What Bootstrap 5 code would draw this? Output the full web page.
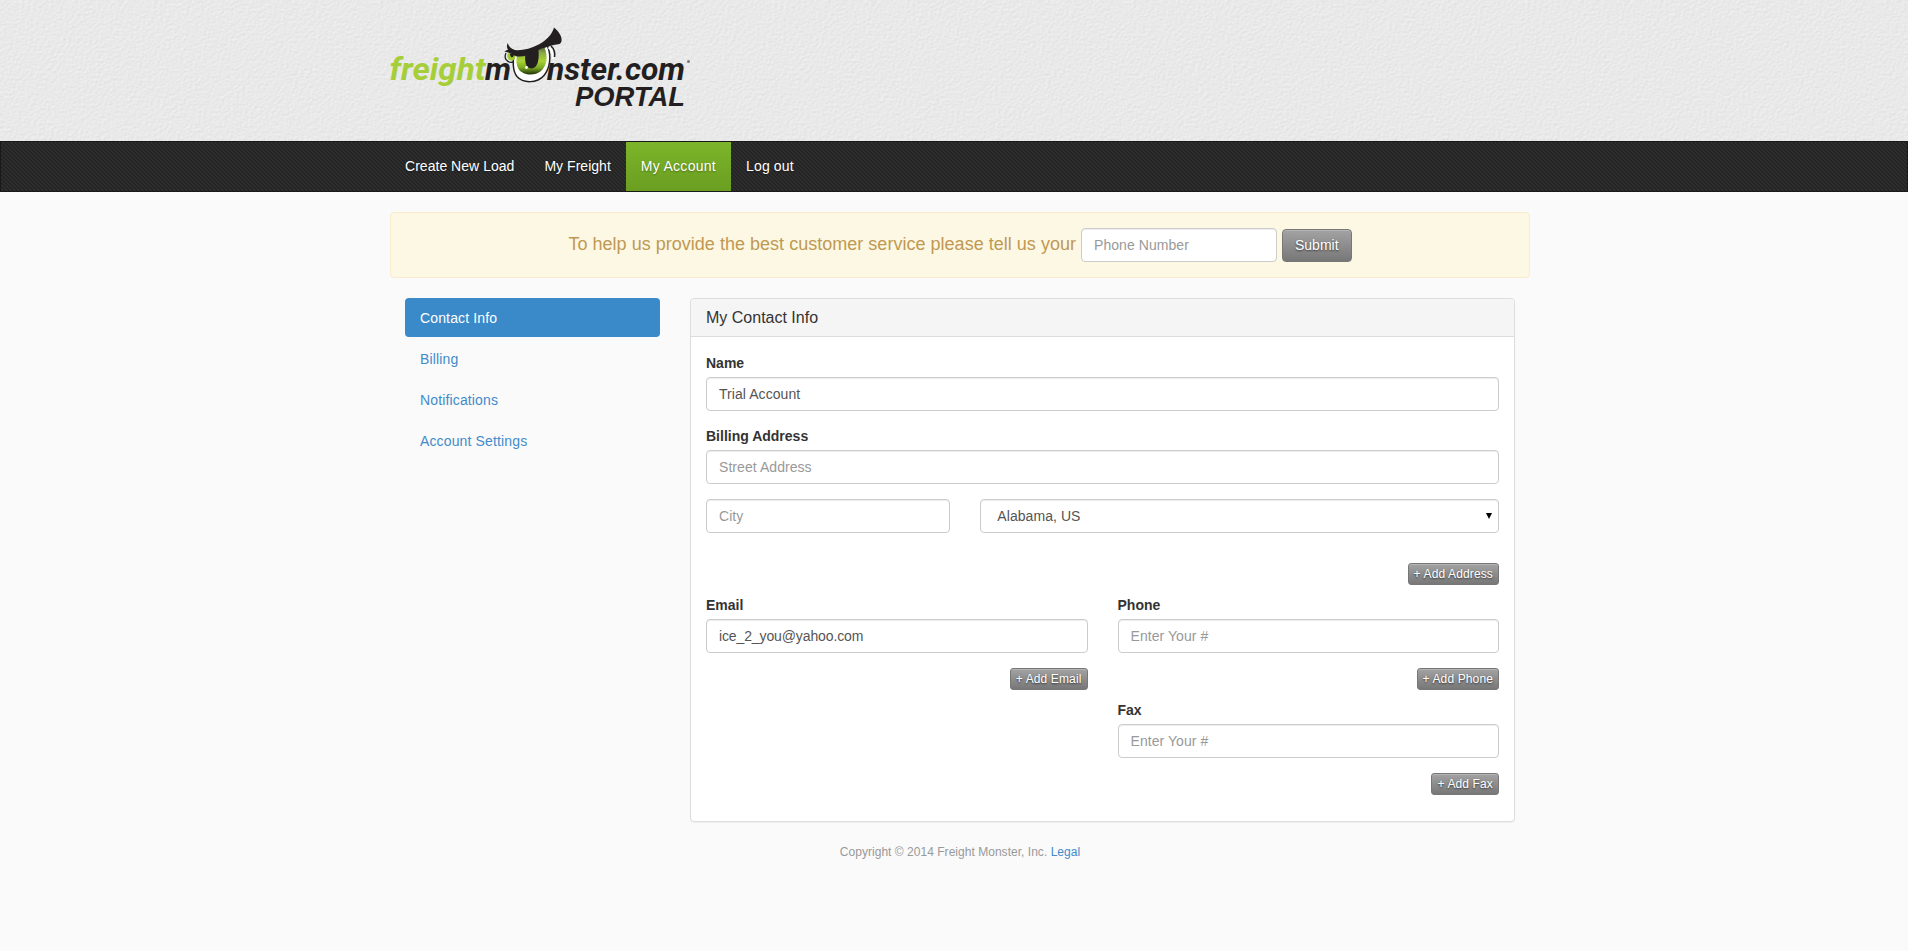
<!DOCTYPE html>
<html lang="en">
<head>
<meta charset="utf-8">
<meta name="viewport" content="width=device-width, initial-scale=1">
<title>Freight Monster Portal</title>
<link href="https://cdn.jsdelivr.net/npm/bootstrap@5.3.0/dist/css/bootstrap.min.css" rel="stylesheet">
<style>
body{font-family:"Liberation Sans",Arial,sans-serif;font-size:14px;line-height:19px;color:#333;background:#fafafa}
a{color:#428bca;text-decoration:none}
.wrap{width:1140px;margin-left:calc((100% - 1128px)/2)}
.masthead{height:141px;background:#e9e9e9;overflow:hidden}
.paper{inset:0;width:100%;height:100%}
.brand-logo{width:304px;height:90px;margin:24px 0 0 -2px}
.mainbar{height:51px;border:1px solid #191919;background:repeating-linear-gradient(45deg,rgba(0,0,0,.22) 0 1.414px,transparent 1.414px 2.828px),#2e2e2e}
.mainbar .nav-link{color:#fff;padding:15px;height:49px;line-height:19px;letter-spacing:.03px;text-shadow:0 1px 2px rgba(0,0,0,.35)}
.mainbar .nav-link.active{background:linear-gradient(#7cb52a,#6a9e21);letter-spacing:.28px}
.mainbar .nav-link.last{letter-spacing:.15px}
.notice{height:66px;margin:20px 0;padding:15px;background:#fcf8e3;border:1px solid #faebcc;border-radius:4px;color:#c09853;font-size:18px}
.notice span{letter-spacing:.02px;padding-bottom:2px}
.form-control,.form-select{height:34px;padding:6px 12px;font-size:14px;line-height:20px;color:#555;border:1px solid #ccc;border-radius:4px;box-shadow:inset 0 1px 1px rgba(0,0,0,.075);letter-spacing:.06px}
.form-control[type=email]{letter-spacing:-.12px}
.form-control::placeholder{color:#999}
.notice .form-control{width:196px;margin:0 5px 0 5px}
.form-select{padding-left:16px;background:#fff url("data:image/svg+xml,%3Csvg xmlns='http://www.w3.org/2000/svg' width='6' height='6'%3E%3Cpath d='M0 0H6L3 6Z'/%3E%3C/svg%3E") no-repeat right 6px center;background-size:6px 6px}
.btn-steel{--bs-btn-color:#fff;--bs-btn-hover-color:#fff;background:linear-gradient(#a3a3a3,#777);border:1px solid #777;border-radius:4px;text-shadow:0 1px 2px rgba(0,0,0,.6);box-shadow:inset 0 1px 0 rgba(255,255,255,.2);font-size:14px;line-height:19px;padding:6px 12px;height:33px}
.notice .btn-steel{margin-top:1px}
.btn-mini{font-size:12px;line-height:18px;height:22px;padding:1px 5px;border-radius:3px;letter-spacing:.13px}
.colpad{padding:0 15px}
.side .nav-link{padding:10px 15px 9px;height:39px;line-height:20px;border-radius:4px;color:#428bca;margin-bottom:2px;letter-spacing:.14px}
.side .nav-link.active{background:#3a89c9;color:#fff}
.panel{border:1px solid #ddd;border-radius:4px;box-shadow:0 1px 1px rgba(0,0,0,.05);height:524px;background:#fff}
.panel .card-header{height:38px;padding:9px 15px;font-size:16px;background:#f5f5f5;border-color:#ddd}
.panel .card-body{padding:16px 15px}
.field{margin-bottom:15px}
.field label{display:block;font-weight:700;line-height:20px;margin-bottom:4px}
.grid-row{--bs-gutter-x:30px}
.btn-line{text-align:right;height:22px;line-height:0;margin-bottom:10px}
.btn-line.spaced{margin-top:30px}
.foot{font-size:12px;color:#999;margin-top:21px;letter-spacing:.03px}
</style>
</head>
<body>
<header class="masthead position-relative">
  <svg class="paper position-absolute" aria-hidden="true">
    <filter id="grain" x="0" y="0" width="100%" height="100%" color-interpolation-filters="sRGB"><feTurbulence type="fractalNoise" baseFrequency=".34 .4" numOctaves="2" seed="4" result="n"/><feDiffuseLighting in="n" surfaceScale=".17" lighting-color="#fff"><feDistantLight azimuth="235" elevation="66"/></feDiffuseLighting></filter>
    <rect width="100%" height="100%" fill="#e9e9e9" filter="url(#grain)"/>
  </svg>
  <div class="wrap position-relative">
    <svg class="brand-logo d-block" viewBox="388 24 304 90" role="img" aria-label="freightmonster.com portal">
      <defs>
        <linearGradient id="iris" x1="0" y1="0" x2="0" y2="1"><stop offset="0" stop-color="#55663a"/><stop offset=".2" stop-color="#8bab45"/><stop offset=".5" stop-color="#a9d334"/><stop offset=".75" stop-color="#7aa822"/><stop offset="1" stop-color="#1d2e08"/></linearGradient>
      </defs>
      <text y="79.500" fill="#231f20" font-family="Roboto" font-style="italic" font-weight="700" font-size="32"><tspan x="389.500" fill="#a6ce39" textLength="96" lengthAdjust="spacingAndGlyphs">freight</tspan><tspan x="485" textLength="26" lengthAdjust="spacingAndGlyphs">m</tspan><tspan x="547" textLength="138" lengthAdjust="spacingAndGlyphs">nster.com</tspan></text>
      <text x="575" y="105.500" fill="#231f20" font-family="'Liberation Sans'" font-style="italic" font-weight="700" font-size="28.500" textLength="110" lengthAdjust="spacingAndGlyphs">PORTAL</text>
      <circle cx="688.500" cy="61.500" r="1.500" fill="#777"/>
      <path d="M514.500 55C512.500 60 512.500 71 517 76.500C523 83.500 537 83.500 544 75.500C549.500 69 552 57 547.500 46Z" fill="#fff" stroke="#231f20" stroke-width="1.500"/>
      <path d="M517 56L544.500 47.500C548.500 57 546.500 66 541 71C534.500 76.500 523 75.500 518.500 69C516 65 516 60 517 56Z" fill="url(#iris)"/>
      <path d="M525.500 52L538 47C539.500 56 539 68 531.500 68.500C525 68.500 524.500 60 525.500 52Z" fill="#231f20"/>
      <circle cx="526.500" cy="67.500" r="1.400" fill="#fff"/>
      <path d="M506 53C503.500 58 507 63.500 513 62" fill="none" stroke="#231f20" stroke-width="1.300"/>
      <path d="M508 53C506 58 509 61 512.500 60.500C514.500 60 515.500 58 515.500 55.500Z" fill="#9ccb30"/>
      <path d="M509.500 53.500H514Q514 58 511 57Z" fill="#231f20"/>
      <path d="M548.500 47.500Q553.500 51 553 59" fill="none" stroke="#fff" stroke-width="2"/>
      <path d="M551 46Q555.500 50 554.500 57" fill="none" stroke="#231f20" stroke-width="1.600"/>
      <path d="M507.700 43C509 47 511 49 515 50C527 51.500 550 43 554 27.500C561 33 564 41 559.500 44C552 45 543 47.500 535 51.500C529 55 522 57.500 516 56.300C513 54 509 52.500 504.300 51.500L508 49.500Q506 47 507.700 43Z" fill="#231f20"/>
    </svg>
  </div>
</header>
<nav class="mainbar">
  <div class="wrap">
    <div class="nav flex-nowrap">
      <a class="nav-link" href="#">Create New Load</a><a class="nav-link" href="#">My Freight</a><a class="nav-link active" href="#">My Account</a><a class="nav-link last" href="#">Log out</a>
    </div>
  </div>
</nav>
<main class="wrap">
  <form class="notice d-flex align-items-center justify-content-center">
    <span>To help us provide the best customer service please tell us your</span>
    <input class="form-control" type="text" placeholder="Phone Number">
    <button class="btn btn-steel" type="button">Submit</button>
  </form>
  <div class="row g-0">
    <aside class="col-3 colpad">
      <div class="nav flex-column side">
        <a class="nav-link active" href="#">Contact Info</a>
        <a class="nav-link" href="#">Billing</a>
        <a class="nav-link" href="#">Notifications</a>
        <a class="nav-link" href="#">Account Settings</a>
      </div>
    </aside>
    <section class="col-9 colpad">
      <div class="card panel">
        <div class="card-header">My Contact Info</div>
        <div class="card-body">
          <div class="field"><label>Name</label><input class="form-control" value="Trial Account"></div>
          <div class="field"><label>Billing Address</label><input class="form-control" placeholder="Street Address"></div>
          <div class="row grid-row">
            <div class="col-4"><input class="form-control" placeholder="City"></div>
            <div class="col-8"><select class="form-select"><option>Alabama, US</option></select></div>
          </div>
          <div class="btn-line spaced"><button class="btn btn-steel btn-mini">+ Add Address</button></div>
          <div class="row grid-row">
            <div class="col-6">
              <div class="field"><label>Email</label><input class="form-control" type="email" value="ice_2_you@yahoo.com"></div>
              <div class="btn-line"><button class="btn btn-steel btn-mini">+ Add Email</button></div>
            </div>
            <div class="col-6">
              <div class="field"><label>Phone</label><input class="form-control" placeholder="Enter Your #"></div>
              <div class="btn-line"><button class="btn btn-steel btn-mini">+ Add Phone</button></div>
              <div class="field"><label>Fax</label><input class="form-control" placeholder="Enter Your #"></div>
              <div class="btn-line"><button class="btn btn-steel btn-mini">+ Add Fax</button></div>
            </div>
          </div>
        </div>
      </div>
    </section>
  </div>
  <footer class="foot text-center">Copyright © 2014 Freight Monster, Inc. <a href="#">Legal</a></footer>
</main>
<script src="https://cdn.jsdelivr.net/npm/bootstrap@5.3.0/dist/js/bootstrap.bundle.min.js"></script>
</body>
</html>
